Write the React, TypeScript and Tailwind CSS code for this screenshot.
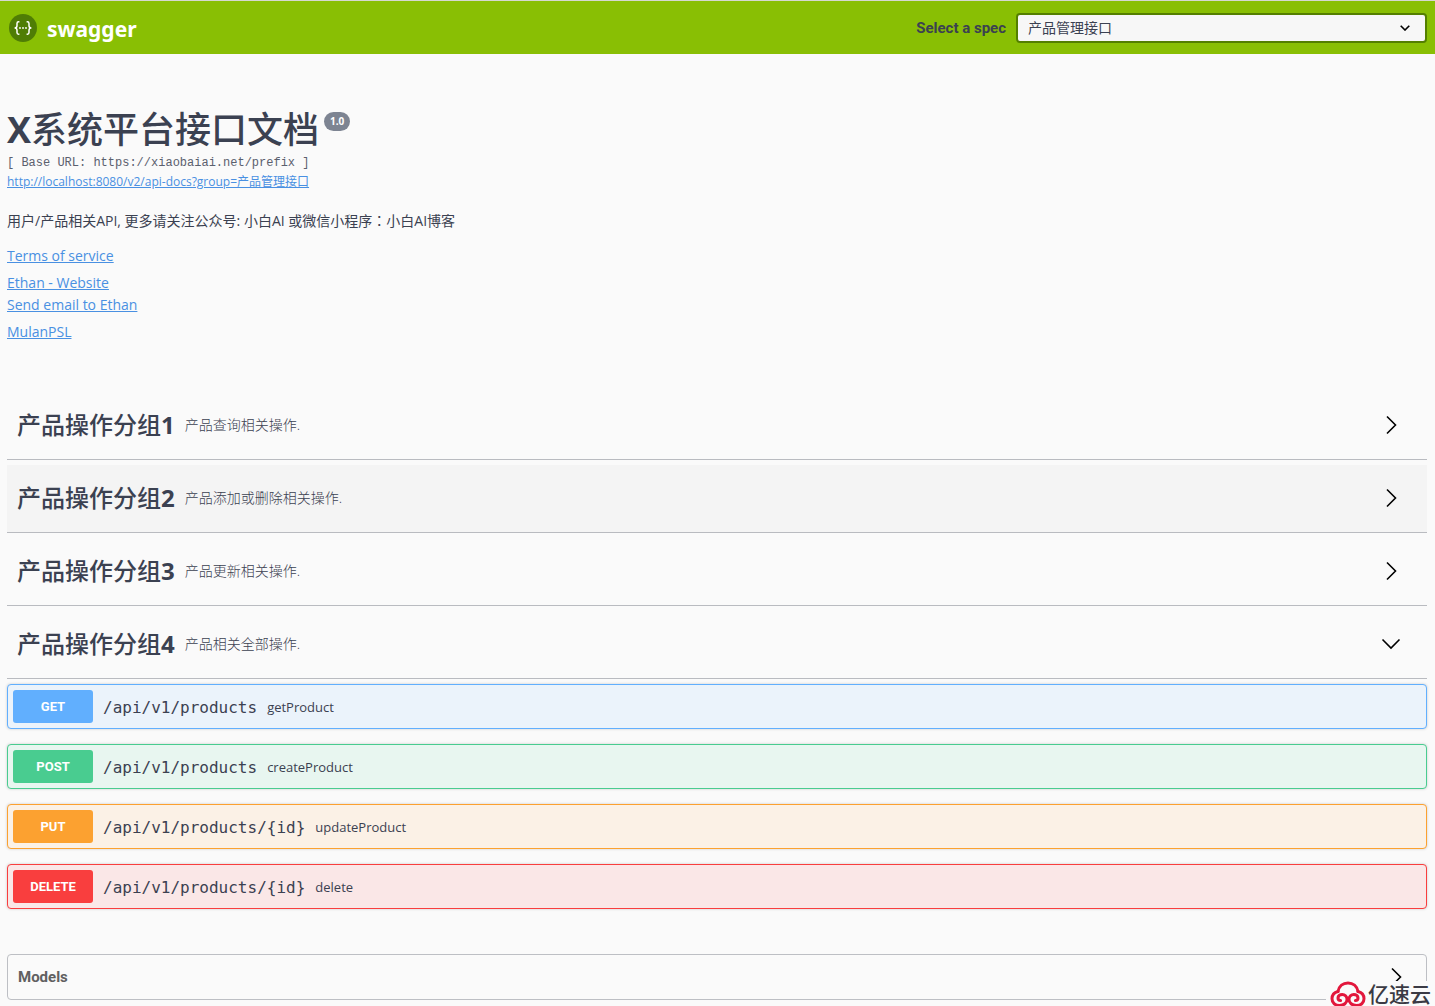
import {useState} from 'react';
import {clsx} from 'clsx';

interface Tag {
  name: string;
  index: number;
  description: string;
  open?: boolean;
  active?: boolean;
}

interface Operation {
  method: string;
  path: string;
  summary: string;
  box: string;
  badge: string;
}

const tags: Tag[] = [
  {name: '产品操作分组', index: 1, description: '产品查询相关操作.'},
  {
    name: '产品操作分组',
    index: 2,
    description: '产品添加或删除相关操作.',
    active: true
  },
  {name: '产品操作分组', index: 3, description: '产品更新相关操作.'},
  {
    name: '产品操作分组',
    index: 4,
    description: '产品相关全部操作.',
    open: true
  }
];

const operations: Operation[] = [
  {
    method: 'GET',
    path: '/api/v1/products',
    summary: 'getProduct',
    box: 'border-[#61affe] bg-[#ebf3fb]',
    badge: 'bg-[#61affe]'
  },
  {
    method: 'POST',
    path: '/api/v1/products',
    summary: 'createProduct',
    box: 'border-[#49cc90] bg-[#e8f6f0]',
    badge: 'bg-[#49cc90]'
  },
  {
    method: 'PUT',
    path: '/api/v1/products/{id}',
    summary: 'updateProduct',
    box: 'border-[#fca130] bg-[#fbf1e6]',
    badge: 'bg-[#fca130]'
  },
  {
    method: 'DELETE',
    path: '/api/v1/products/{id}',
    summary: 'delete',
    box: 'border-[#f93e3e] bg-[#fae7e7]',
    badge: 'bg-[#f93e3e]'
  }
];

const Arrow = ({open}: {open?: boolean}) => (
  <svg
    viewBox="0 0 20 20"
    className="size-5 shrink-0"
    fill="none"
    stroke="#000"
    strokeWidth="1.6"
    aria-hidden="true"
  >
    <path d={open ? 'M1.5 5.5 10 14l8.5-8.5' : 'M6 1.5 14.5 10 6 18.5'} />
  </svg>
);

const SwaggerMark = () => (
  <svg viewBox="0 0 28 28" className="size-7" fill="none" aria-hidden="true">
    <circle cx="14" cy="14" r="14" fill="#4f7d05" />
    <g stroke="#fff" strokeWidth="1.5">
      <path d="M10.4 7.8H9.600Q8 7.800 8 9.400v2.400Q8 14 5.600 14 8 14 8 16.200v2.400q0 1.600 1.600 1.600h.8" />
      <path d="M17.600 7.800h.8q1.600 0 1.600 1.600v2.400q0 2.200 2.400 2.200-2.400 0-2.400 2.200v2.400q0 1.600-1.600 1.600h-.8" />
    </g>
    <g fill="#fff">
      <circle cx="11" cy="14" r=".9" />
      <circle cx="14" cy="14" r=".9" />
      <circle cx="17" cy="14" r=".9" />
    </g>
  </svg>
);

const CloudMark = () => (
  <svg
    viewBox="0 0 36 26"
    className="h-[26px] w-9"
    fill="none"
    stroke="#e2173c"
    strokeWidth="3"
    strokeLinecap="round"
    aria-hidden="true"
  >
    <path d="M8 10.500C9 5 13 2 18 2s9 3 10 8.500" />
    <path d="M8 10.500C4 11.500 2 14.500 2 17.800 2 21.500 5 24.500 9.500 24.500c4.500 0 7.500-2.700 7.500-6 0-3-2.200-5-4.800-5-2.400 0-4.200 1.600-4.200 3.400 0 1.600 1.200 2.600 2.600 2.600" />
    <path d="M28 10.500c4 1 6 4 6 7.300 0 3.700-3 6.700-7.500 6.700-4.500 0-7.500-2.700-7.500-6 0-3 2.200-5 4.800-5 2.400 0 4.200 1.600 4.200 3.400 0 1.600-1.200 2.600-2.600 2.600" />
  </svg>
);

const Topbar = () => {
  const [spec, setSpec] = useState('产品管理接口');

  return (
    <header className="flex h-[54px] items-center justify-between border-t border-[#d5d8d0] bg-[#89bf04] px-2">
      <a href="#" className="flex items-center gap-2.5 px-px">
        <SwaggerMark />
        <span className="pt-0.5 font-['Noto_Sans','Open_Sans',sans-serif] text-[21px] leading-7 font-bold text-white">
          swagger
        </span>
      </a>
      <div className="flex items-center gap-2.5">
        <label
          htmlFor="spec"
          className="pt-0.5 font-[Roboto,sans-serif] text-[15px] font-bold text-[#3b4151]"
        >
          Select a spec
        </label>
        <div className="relative">
          <select
            id="spec"
            value={spec}
            onChange={e => setSpec(e.target.value)}
            className="h-[30px] w-[411px] appearance-none rounded border-2 border-[#547f00] bg-[#f7f7f7] px-2.5 text-sm leading-5 text-[#3b4151]"
          >
            <option>产品管理接口</option>
          </select>
          <svg
            viewBox="0 0 10 6"
            className="pointer-events-none absolute top-3 right-[17px] h-1.5 w-2.5"
            fill="none"
            stroke="#000"
            strokeWidth="1.6"
            aria-hidden="true"
          >
            <path d="M.7.7 5 5 9.300.7" />
          </svg>
        </div>
      </div>
    </header>
  );
};

const Info = () => (
  <section className="pt-[51px] pb-[49px]">
    <div className="flex items-start gap-[5px]">
      <h1 className="text-4xl leading-[50px] font-medium">
        <span className="font-bold">X</span>系统平台接口文档
      </h1>
      <span className="mt-[7px] rounded-full bg-[#7d8492] px-1.5 text-[10px] leading-[19px] font-bold text-white">
        1.0
      </span>
    </div>
    <pre className="font-['Liberation_Mono',monospace] text-xs leading-4 text-[#5b606e]">
      [ Base URL: https://xiaobaiai.net/prefix ]
    </pre>
    <a
      href="#"
      className="block w-fit text-xs leading-[22px] text-[#4990e2] underline"
    >
      http://localhost:8080/v2/api-docs?group=产品管理接口
    </a>
    <p className="pt-4 pb-[13px] text-sm leading-[22px]">
      用户/产品相关API, 更多请关注公众号: 小白AI 或微信小程序
      <span className="font-['Noto_Sans_CJK_TC',sans-serif]">：</span>
      小白AI博客
    </p>
    <div className="flex flex-col items-start text-sm leading-[22px] text-[#4990e2]">
      <a href="#" className="mb-[5px] underline">
        Terms of service
      </a>
      <a href="#" className="underline">
        Ethan - Website
      </a>
      <a href="#" className="mb-[5px] underline">
        Send email to Ethan
      </a>
      <a href="#" className="underline">
        MulanPSL
      </a>
    </div>
  </section>
);

const TagRow = ({tag}: {tag: Tag}) => (
  <button
    type="button"
    aria-expanded={Boolean(tag.open)}
    className={clsx(
      'flex h-[68px] w-full items-center border-b border-[#b9bbc0] pr-[26px] pb-0.5 pl-2.5 text-left',
      tag.active && 'bg-[#f4f4f4]'
    )}
  >
    <span className="text-2xl leading-8 font-medium">
      {tag.name}
      <span className="font-bold">{tag.index}</span>
    </span>
    <span className="flex-1 px-2.5 text-sm leading-5 font-light">
      {tag.description}
    </span>
    <Arrow open={tag.open} />
  </button>
);

const OperationRow = ({operation}: {operation: Operation}) => (
  <button
    type="button"
    className={clsx(
      'flex h-[45px] w-full items-center rounded border px-[5px] text-left shadow-[0_0_3px_rgba(0,0,0,0.19)]',
      operation.box
    )}
  >
    <span
      className={clsx(
        'w-20 rounded-[3px] text-center font-[Roboto,sans-serif] text-[13px] leading-[33px] font-bold text-white',
        operation.badge
      )}
    >
      {operation.method}
    </span>
    <span className="px-2.5 pt-0.5 font-['DejaVu_Sans_Mono',monospace] text-base leading-6">
      {operation.path}
    </span>
    <span className="text-[13px] leading-5">{operation.summary}</span>
  </button>
);

export default function App() {
  return (
    <div className="min-h-screen bg-[#fafafa] font-['Open_Sans','Noto_Sans_CJK_SC',sans-serif] text-[#3b4151]">
      <Topbar />
      <main className="pr-2 pb-1.5 pl-[7px]">
        <Info />
        <section className="flex flex-col gap-[5px]">
          {tags.map(tag => (
            <TagRow key={tag.index} tag={tag} />
          ))}
          <div className="flex flex-col gap-[15px]">
            {operations.map(operation => (
              <OperationRow
                key={operation.method}
                operation={operation}
              />
            ))}
          </div>
        </section>
        <button
          type="button"
          className="mt-[45px] flex h-[46px] w-full items-center justify-between rounded border border-[#bdbfc4] pr-5 pl-2.5 text-left"
        >
          <span className="font-[Roboto,sans-serif] text-[15px] font-bold text-[#606060]">
            Models
          </span>
          <Arrow />
        </button>
      </main>
      <div className="fixed right-0 bottom-0 flex h-[25px] items-center gap-0.5 overflow-hidden bg-[#fafafa] pr-1 pl-1">
        <CloudMark />
        <span className="text-[21px] leading-6 font-medium text-[#3a3a44]">
          亿速云
        </span>
      </div>
    </div>
  );
}
